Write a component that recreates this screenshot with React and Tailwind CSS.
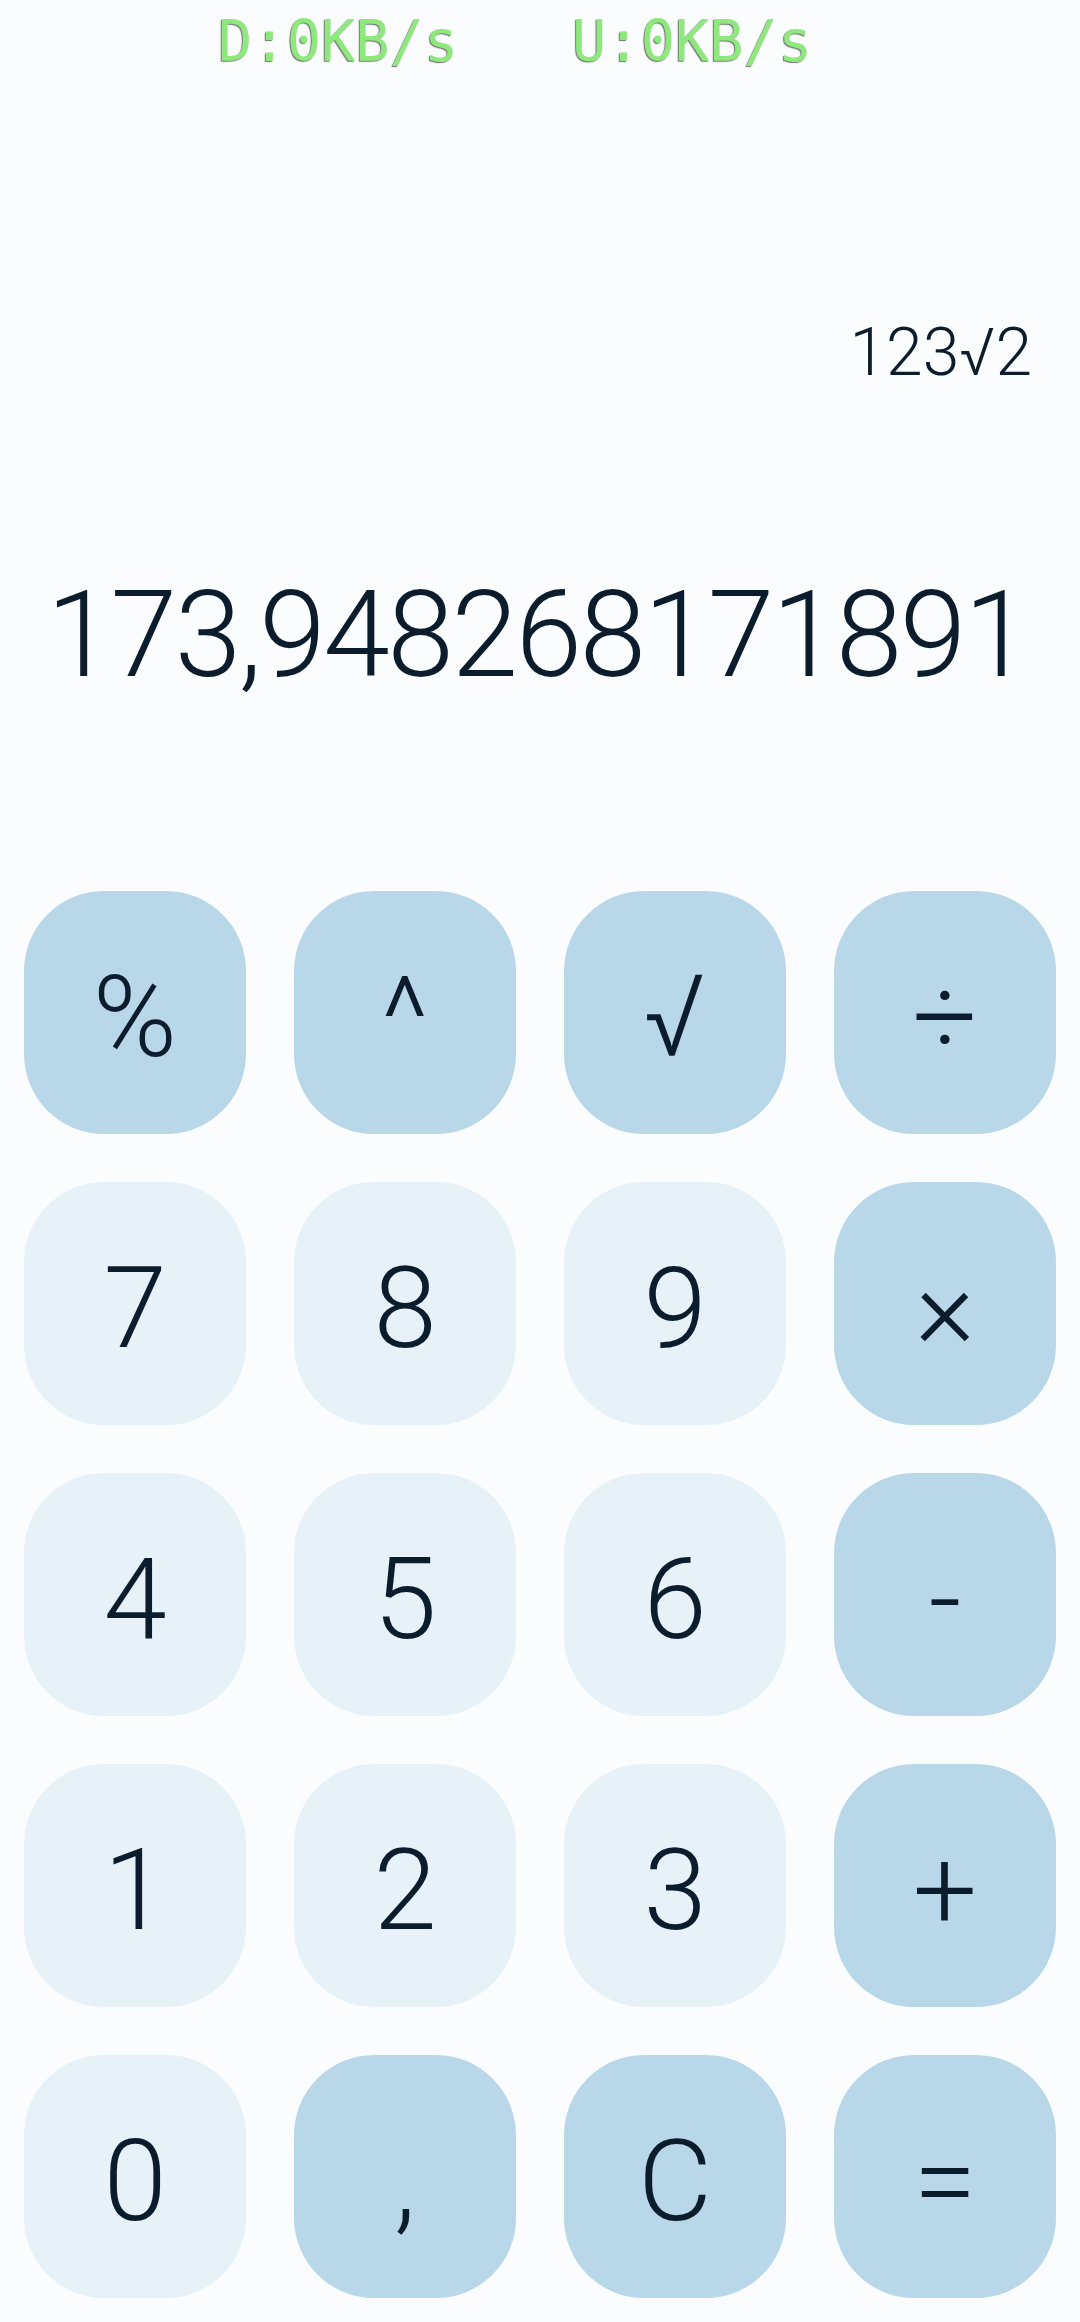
import React from 'react';

const KEYS = [
    { label: '%', dark: true },
    { label: '^', dark: true },
    { label: '√', dark: true },
    { label: '÷', dark: true },
    { label: '7' },
    { label: '8' },
    { label: '9' },
    { label: '×', dark: true },
    { label: '4' },
    { label: '5' },
    { label: '6' },
    { label: '-', dark: true },
    { label: '1' },
    { label: '2' },
    { label: '3' },
    { label: '+', dark: true },
    { label: '0' },
    { label: ',', dark: true },
    { label: 'C', dark: true },
    { label: '=', dark: true },
];

const roboto = "font-['Roboto','Noto_Sans',sans-serif]";

function Key({ label, dark }) {
    return (
        <button
            className={`h-[243px] rounded-[80px] flex items-center justify-center text-[114px] font-light leading-none text-[#0b1d2c] ${roboto} ${dark ? 'bg-[#b8d7e8]' : 'bg-[#e6f1f8]'}`}
        >
            <span className="translate-y-[4px]">{label}</span>
        </button>
    );
}

export default function App() {
    return (
        <div className="w-[1080px] h-[2322px] bg-[#fbfcfe] overflow-hidden flex flex-col">
            {/* net speed overlay */}
            <div className="h-[80px] pt-[13px] pl-[218px] flex font-['DejaVu_Sans_Mono',monospace] text-[57px] leading-none text-[#8fe87d] [text-shadow:-1px_1px_1px_rgba(0,0,0,0.55)]">
                <span className="w-[354px]">D:0KB/s</span>
                <span>U:0KB/s</span>
            </div>

            <div className={`mt-[240px] h-[64px] pr-[48px] text-right text-[66px] font-light leading-none text-[#0b1d2c] ${roboto}`}>
                123√2
            </div>

            <div className={`mt-[191px] h-[120px] pr-[52px] text-right text-[120px] font-light leading-none tracking-[-2.5px] text-[#0b1d2c] ${roboto}`}>
                173,948268171891
            </div>

            <div className="mt-[196px] px-[24px] grid grid-cols-4 gap-x-[48px] gap-y-[48px]">
                {KEYS.map((k) => (
                    <Key key={k.label} {...k} />
                ))}
            </div>
        </div>
    );
}
